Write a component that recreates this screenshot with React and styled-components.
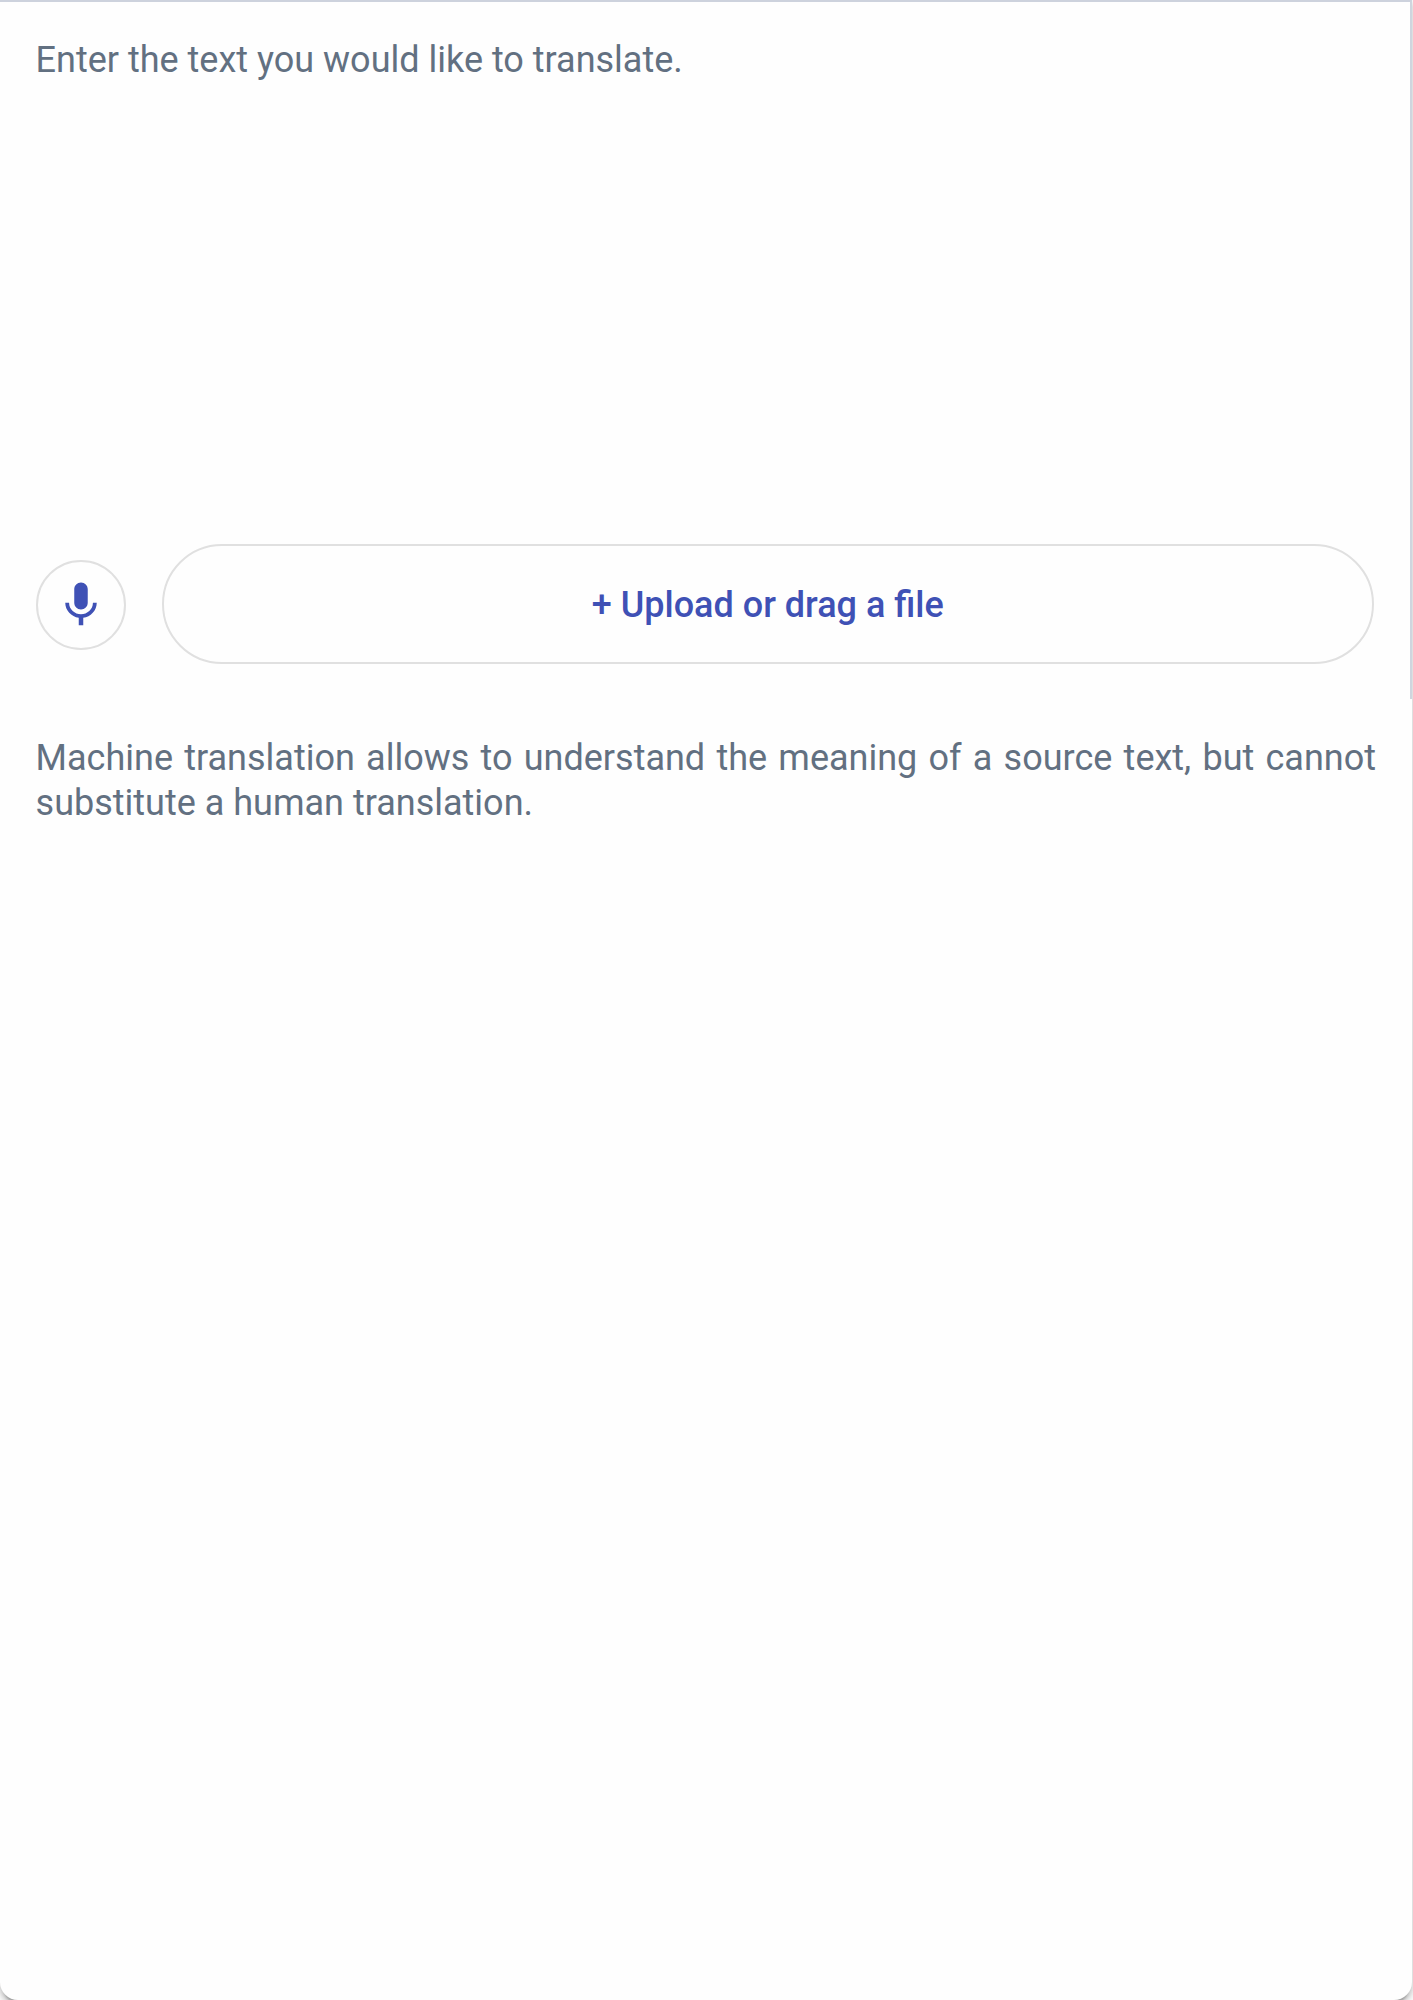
import React from 'react';
import styled, { createGlobalStyle } from 'styled-components';

const GlobalStyle = createGlobalStyle`
  *, *::before, *::after { box-sizing: border-box; }
  body {
    margin: 0;
    background: #fafafa;
    font-family: Roboto, "Liberation Sans", sans-serif;
    overflow: hidden;
  }
`;

const Card = styled.main`
  display: flex;
  flex-direction: column;
  width: 1412px;
  height: 2000px;
  background: #fefefe;
  border-radius: 0 0 18px 18px;
  box-shadow:
    0 6.75px 2.25px -4.5px rgba(0, 0, 0, 0.2),
    0 4.5px 4.5px rgba(0, 0, 0, 0.14),
    0 2.25px 11.25px rgba(0, 0, 0, 0.12);
`;

const SourcePanel = styled.section`
  display: flex;
  flex-direction: column;
  justify-content: space-between;
  width: 1412px;
  height: 699px;
  padding: 36px 36px 35px 35.6px;
  border-top: 2px solid #cdd2dd;
  border-right: 2px solid #cfd5de;
`;

const Text = styled.p`
  margin: 0;
  color: #627081;
  font-size: 36px;
  line-height: 45px;
  text-align: ${({ $justify }) => ($justify ? 'justify' : 'left')};
`;

const Actions = styled.div`
  display: flex;
  align-items: center;
  gap: 36px;
`;

const OutlineButton = styled.button`
  display: flex;
  align-items: center;
  justify-content: center;
  padding: 0;
  border: 2px solid #e0e0e0;
  background: transparent;
  color: #3f51b5;
  font: 500 36px/45px Roboto, "Liberation Sans", sans-serif;
`;

const MicButton = styled(OutlineButton)`
  flex: none;
  width: 90px;
  height: 90px;
  margin-top: 2px;
  border-radius: 50%;
`;

const UploadButton = styled(OutlineButton)`
  flex: 1;
  height: 120px;
  padding-top: 3px;
  border-radius: 60px;
`;

const MicIcon = styled.svg`
  width: 54px;
  height: 54px;
  fill: currentColor;
`;

const Notice = styled.footer`
  padding: 37px 36px 0 35.6px;
`;

export default function App() {
  return (
    <>
      <GlobalStyle />
      <Card>
        <SourcePanel>
          <Text>Enter the text you would like to translate.</Text>
          <Actions>
            <MicButton aria-label="Speak">
              <MicIcon viewBox="0 0 24 24">
                <path d="M12 14c1.66 0 2.99-1.34 2.99-3L15 5c0-1.66-1.34-3-3-3S9 3.34 9 5v6c0 1.66 1.34 3 3 3zm5.3-3c0 3-2.54 5.1-5.3 5.1S6.7 14 6.7 11H5c0 3.41 2.72 6.23 6 6.72V21h2v-3.28c3.28-.48 6-3.3 6-6.72h-1.7z" />
              </MicIcon>
            </MicButton>
            <UploadButton>+ Upload or drag a file</UploadButton>
          </Actions>
        </SourcePanel>
        <Notice>
          <Text $justify>
            Machine translation allows to understand the meaning of a source text, but cannot
            substitute a human translation.
          </Text>
        </Notice>
      </Card>
    </>
  );
}
